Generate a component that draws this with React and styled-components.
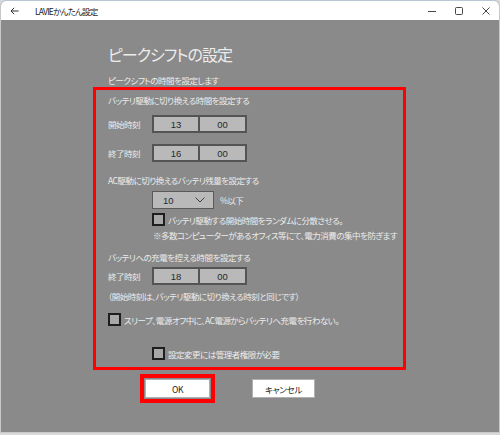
import React from "react";
import styled, { createGlobalStyle } from "styled-components";

const Global = createGlobalStyle`
  html, body { margin: 0; padding: 0; }
  body {
    width: 500px; height: 435px; overflow: hidden;
    font-family: "Noto Sans CJK JP", "Noto Sans", sans-serif;
    font-feature-settings: "palt";
    background: #d9d9d9;
  }
  #root { width: 500px; height: 435px; }
`;

const Window = styled.div`
  box-sizing: border-box;
  width: 500px;
  height: 433px;
  display: flex;
  flex-direction: column;
  border: 1px solid #c9c9c9;
  border-top-color: #b9c6d6;
  border-radius: 6px 6px 0 0;
  overflow: hidden;
  background: #8a8a8a;
`;

const TitleBar = styled.div`
  height: 19px;
  flex: none;
  background: #ffffff;
  display: flex;
  align-items: center;
  padding-left: 9px;
  color: #222;
  font-size: 8.5px;
`;

const TitleText = styled.span`
  margin-left: 16px;
  letter-spacing: -0.8px;
`;

const Controls = styled.div`
  margin-left: auto;
  display: flex;
  align-items: center;
  height: 100%;
`;

const CtrlBtn = styled.div`
  width: 27px;
  height: 100%;
  display: flex;
  align-items: center;
  justify-content: center;
`;

const Content = styled.div`
  flex: 1;
  display: flex;
  flex-direction: column;
  padding-left: 92px;
  color: #ececec;
`;

const Heading = styled.h1`
  margin: 24px 0 0 15px;
  font-size: 16px;
  line-height: 20px;
  font-weight: 400;
  letter-spacing: -1px;
`;

const Sub = styled.div`
  margin: 10px 0 0 15px;
  font-size: 8.5px;
  line-height: 12px;
  letter-spacing: -0.5px;
`;

const RedBox = styled.div`
  box-sizing: border-box;
  margin-top: 1px;
  width: 313px;
  height: 283px;
  border: 3px solid #ff0000;
  padding: 4px 0 0 12px;
  display: flex;
  flex-direction: column;
  letter-spacing: -0.5px;
`;

const Text = styled.div`
  font-size: 8.5px;
  line-height: 12px;
  margin-top: ${(p) => p.$mt || 0}px;
  margin-left: ${(p) => p.$ml || 0}px;
  white-space: nowrap;
`;

const Row = styled.div`
  display: flex;
  align-items: center;
  margin-top: ${(p) => p.$mt || 0}px;
  margin-left: ${(p) => p.$ml || 0}px;
  font-size: 8.5px;
  white-space: nowrap;
`;

const Label = styled.span`
  width: 44px;
  flex: none;
`;

const TimeBox = styled.div`
  display: flex;
  box-sizing: border-box;
  height: 18px;
  border: 2px solid #545454;
  background: #b9b9b9;
`;

const Cell = styled.div`
  width: ${(p) => p.$w}px;
  display: flex;
  align-items: center;
  justify-content: center;
  color: #2a2a2a;
  font-family: "Liberation Sans", Arial, sans-serif;
  font-size: 9.5px;
  letter-spacing: 0;
  border-left: ${(p) => (p.$divider ? "2px solid #545454" : "none")};
`;

const Select = styled.div`
  box-sizing: border-box;
  width: 62px;
  height: 18px;
  border: 1px solid #5a5a5a;
  background: #b9b9b9;
  display: flex;
  align-items: center;
  padding: 0 8px 0 10px;
  color: #2a2a2a;
  font-family: "Liberation Sans", Arial, sans-serif;
  font-size: 9.5px;
  letter-spacing: 0;
`;

const Chevron = styled.svg`
  margin-left: auto;
`;

const Suffix = styled.span`
  margin-left: 6px;
`;

const Box = styled.span`
  box-sizing: border-box;
  width: 13px;
  height: 13px;
  flex: none;
  border: 2px solid #1e1e1e;
  background: #a8a8a8;
  margin-right: 3px;
`;

const Buttons = styled.div`
  display: flex;
  align-items: center;
  margin-top: 4px;
  margin-left: 47px;
`;

const Focus = styled.div`
  box-sizing: border-box;
  width: 75px;
  height: 29px;
  border: 4px solid #ff0000;
  padding: 1px;
  display: flex;
`;

const Btn = styled.div`
  box-sizing: border-box;
  width: ${(p) => p.$w || 63}px;
  height: ${(p) => p.$h || 19}px;
  flex: ${(p) => (p.$fill ? 1 : "none")};
  background: #ffffff;
  border: 1px solid #b0b0b0;
  color: #1a1a1a;
  font-size: 8.5px;
  letter-spacing: -0.3px;
  display: flex;
  align-items: center;
  justify-content: center;
  margin-left: ${(p) => p.$ml || 0}px;
`;

const TimeRow = ({ label, h, m, mt }) => (
  <Row $mt={mt}>
    <Label>{label}</Label>
    <TimeBox>
      <Cell $w={44}>{h}</Cell>
      <Cell $w={45} $divider>{m}</Cell>
    </TimeBox>
  </Row>
);

export default function App() {
  return (
    <>
      <Global />
      <Window>
        <TitleBar>
          <svg width="9" height="8" viewBox="0 0 9 8">
            <path d="M8.5 4H1M4.2 0.8L1 4l3.2 3.2" stroke="#333" strokeWidth="1" fill="none" />
          </svg>
          <TitleText>LAVIEかんたん設定</TitleText>
          <Controls>
            <CtrlBtn>
              <svg width="8" height="8" viewBox="0 0 8 8">
                <path d="M0 4.5h8" stroke="#333" strokeWidth="0.9" />
              </svg>
            </CtrlBtn>
            <CtrlBtn>
              <svg width="8" height="8" viewBox="0 0 8 8">
                <rect x="0.5" y="0.5" width="7" height="7" rx="1" stroke="#333" strokeWidth="0.9" fill="none" />
              </svg>
            </CtrlBtn>
            <CtrlBtn>
              <svg width="8" height="8" viewBox="0 0 8 8">
                <path d="M0.5 0.5l7 7M7.5 0.5l-7 7" stroke="#333" strokeWidth="0.9" />
              </svg>
            </CtrlBtn>
          </Controls>
        </TitleBar>
        <Content>
          <Heading>ピークシフトの設定</Heading>
          <Sub>ピークシフトの時間を設定します</Sub>
          <RedBox>
            <Text>バッテリ駆動に切り換える時間を設定する</Text>
            <TimeRow label="開始時刻" h="13" m="00" mt={9} />
            <TimeRow label="終了時刻" h="16" m="00" mt={11} />
            <Text $mt={12}>AC駆動に切り換えるバッテリ残量を設定する</Text>
            <Row $mt={5} $ml={44}>
              <Select>
                10
                <Chevron width="10" height="6" viewBox="0 0 10 6">
                  <path d="M0.5 0.5L5 5l4.5-4.5" stroke="#333" strokeWidth="0.9" fill="none" />
                </Chevron>
              </Select>
              <Suffix>%以下</Suffix>
            </Row>
            <Row $mt={4} $ml={44}>
              <Box />
              バッテリ駆動する開始時間をランダムに分散させる。
            </Row>
            <Text $mt={3} $ml={45}>
              ※多数コンピューターがあるオフィス等にて、電力消費の集中を防ぎます
            </Text>
            <Text $mt={10}>バッテリへの充電を控える時間を設定する</Text>
            <TimeRow label="終了時刻" h="18" m="00" mt={4} />
            <Text $mt={5}>（開始時刻は、バッテリ駆動に切り換える時刻と同じです）</Text>
            <Row $mt={11} $ml={0}>
              <Box />
              スリープ、電源オフ中に、AC電源からバッテリへ充電を行わない。
            </Row>
            <Row $mt={21} $ml={44}>
              <Box />
              設定変更には管理者権限が必要
            </Row>
          </RedBox>
          <Buttons>
            <Focus>
              <Btn $fill $h={19}>OK</Btn>
            </Focus>
            <Btn $ml={37}>キャンセル</Btn>
          </Buttons>
        </Content>
      </Window>
    </>
  );
}
